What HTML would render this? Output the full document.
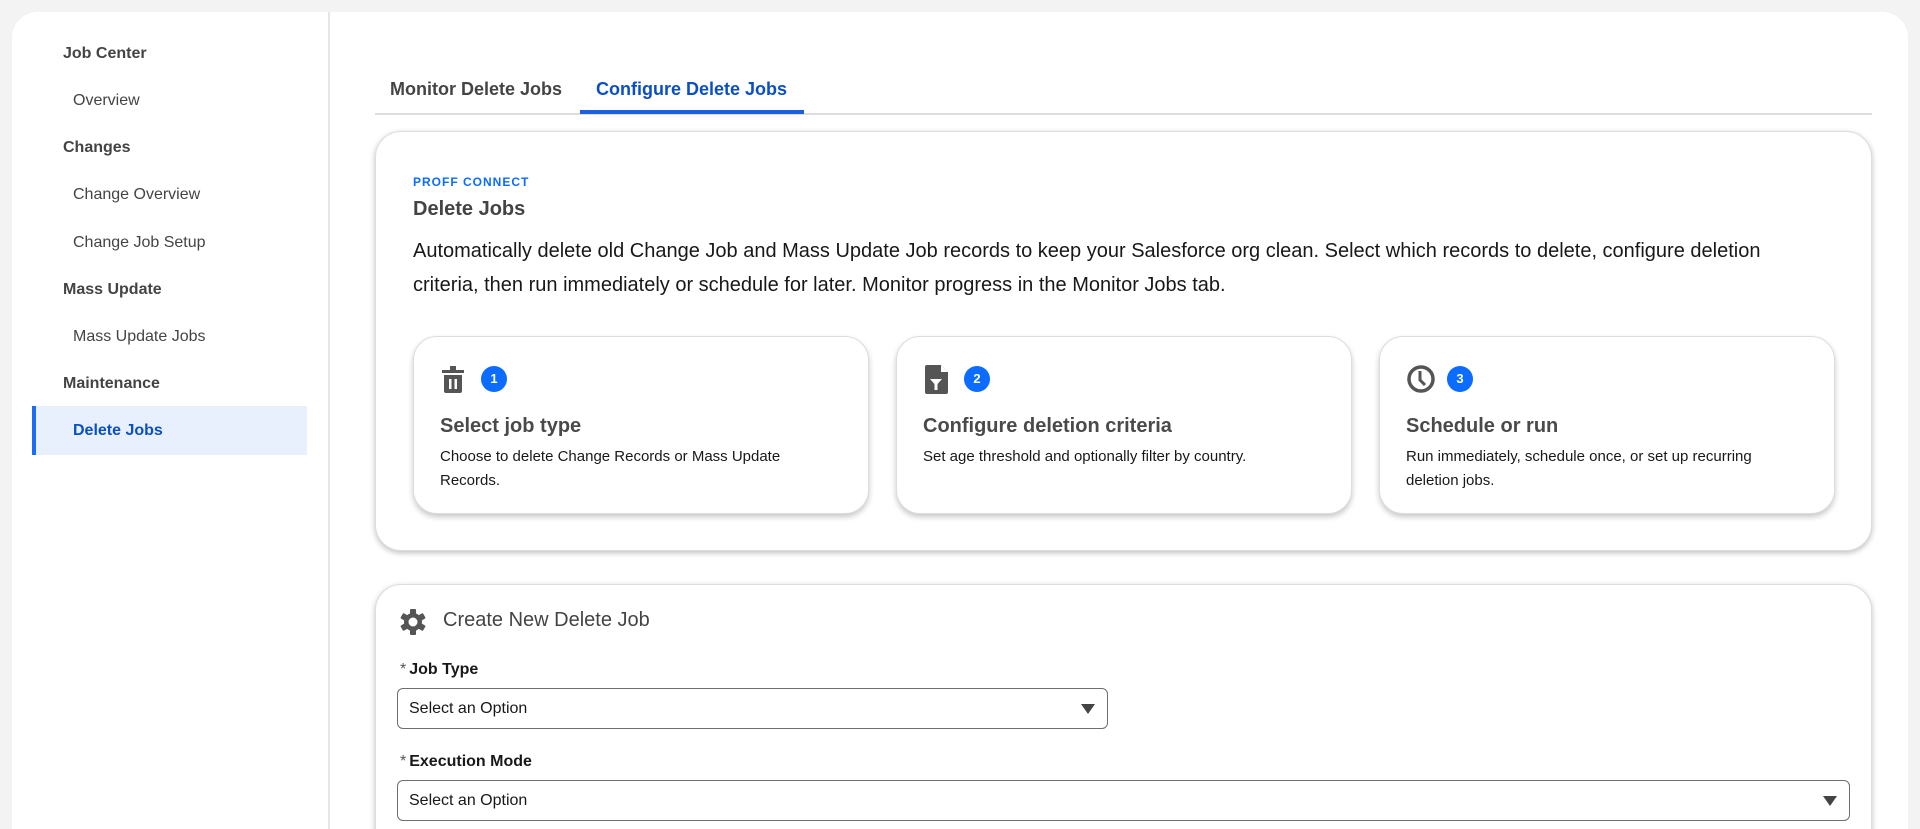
<!DOCTYPE html>
<html><head><style>
*{box-sizing:border-box;margin:0;padding:0}
html,body{width:1920px;height:829px;overflow:hidden}
body{background:#f3f3f3;font-family:"Liberation Sans",Arial,sans-serif;position:relative}
.wrap{position:absolute;left:0;top:0;width:1920px;height:829px;overflow:hidden}
.main{position:absolute;left:12px;top:12px;width:1896px;height:900px;background:#fff;border-radius:26px}
.div{position:absolute;left:328px;top:12px;width:2px;height:830px;background:#e5e5e5}
.abs{position:absolute;white-space:nowrap}
.sh{font-weight:bold;font-size:16px;color:#444;left:63px}
.si{font-size:16px;color:#444;left:73px}
.act{position:absolute;left:32px;top:406px;width:275px;height:49px;background:#e8f0fd;border-left:4px solid #1b6ef3}
.card{position:absolute;background:#fff;border-radius:26px;box-shadow:0 2px 6px rgba(0,0,0,.25);border:1px solid #ddd}
.step{position:absolute;top:336px;width:456px;height:178px;background:#fff;border-radius:24px;box-shadow:0 3px 6px rgba(0,0,0,.22);border:1px solid #ddd}
.step svg{position:absolute;left:27px;top:27px}
.badge{position:absolute;left:67px;top:29px;width:26px;height:26px;border-radius:50%;background:#0b6cff;color:#fff;font-size:13px;font-weight:bold;text-align:center;line-height:26px}
.st{position:absolute;left:26px;top:78px;font-size:20px;font-weight:bold;color:#4a4a4a}
.sd{position:absolute;left:26px;top:108px;font-size:15px;line-height:24px;color:#181818;width:400px}
.lbl{font-size:16px;font-weight:bold;color:#181818;left:400px}
.lbl span{color:#555;font-weight:normal;margin-right:3px}
.sel{position:absolute;height:41px;border:1px solid #6e6e6e;border-radius:6px;font-size:16px;color:#181818;padding-left:11px;line-height:39px}
.sel:after{content:"";position:absolute;right:12px;top:15px;border-left:7px solid transparent;border-right:7px solid transparent;border-top:10px solid #444}
</style></head><body><div class="wrap">
<div class="main"></div>
<div class="div"></div>
<div class="abs sh" style="top:45px">Job Center</div>
<div class="abs si" style="top:92px">Overview</div>
<div class="abs sh" style="top:139px">Changes</div>
<div class="abs si" style="top:186px">Change Overview</div>
<div class="abs si" style="top:234px">Change Job Setup</div>
<div class="abs sh" style="top:281px">Mass Update</div>
<div class="abs si" style="top:328px">Mass Update Jobs</div>
<div class="abs sh" style="top:375px">Maintenance</div>
<div class="act"></div>
<div class="abs si" style="top:422px;color:#0b4fc4;font-weight:bold">Delete Jobs</div>

<div class="abs" style="left:390px;top:79px;font-size:18px;font-weight:bold;color:#444">Monitor Delete Jobs</div>
<div class="abs" style="left:596px;top:79px;font-size:18px;font-weight:bold;color:#0b4fc4">Configure Delete Jobs</div>
<div class="abs" style="left:375px;top:113px;width:1497px;height:2px;background:#ddd"></div>
<div class="abs" style="left:580px;top:110px;width:224px;height:4px;background:#1b5fdf"></div>

<div class="card" style="left:375px;top:131px;width:1497px;height:420px"></div>
<div class="abs" style="left:413px;top:175px;font-size:12px;font-weight:bold;color:#0b6cff;letter-spacing:1px">PROFF CONNECT</div>
<div class="abs" style="left:413px;top:198px;font-size:20px;font-weight:bold;color:#444">Delete Jobs</div>
<div class="abs" style="left:413px;top:234px;font-size:20px;line-height:34px;color:#181818;white-space:normal;width:1400px">Automatically delete old Change Job and Mass Update Job records to keep your Salesforce org clean. Select which records to delete, configure deletion criteria, then run immediately or schedule for later. Monitor progress in the Monitor Jobs tab.</div>

<div class="step" style="left:413px">
<svg width="28" height="32" viewBox="0 0 28 32"><rect x="9" y="2" width="6" height="4" fill="#555"/><rect x="1" y="6" width="22" height="3" fill="#555"/><path d="M3 11h18v16a2 2 0 0 1-2 2H5a2 2 0 0 1-2-2z" fill="#555"/><rect x="8" y="15" width="2.5" height="10" fill="#fff"/><rect x="13.5" y="15" width="2.5" height="10" fill="#fff"/></svg>
<div class="badge">1</div><div class="st">Select job type</div><div class="sd">Choose to delete Change Records or Mass Update Records.</div></div>
<div class="step" style="left:896px">
<svg width="28" height="32" viewBox="0 0 28 32"><path d="M3 1h14l7 7v20a2 2 0 0 1-2 2H3a2 2 0 0 1-2-2V3a2 2 0 0 1 2-2z" fill="#555"/><path d="M17 1v7h7" fill="#fff"/><path d="M6 15h12l-4.5 5v6h-3v-6z" fill="#fff"/></svg>
<div class="badge">2</div><div class="st">Configure deletion criteria</div><div class="sd">Set age threshold and optionally filter by country.</div></div>
<div class="step" style="left:1379px">
<svg width="30" height="32" viewBox="0 0 30 32"><circle cx="14" cy="15" r="12" fill="none" stroke="#555" stroke-width="3.5"/><path d="M13 7v9l5 5" fill="none" stroke="#555" stroke-width="3"/></svg>
<div class="badge">3</div><div class="st">Schedule or run</div><div class="sd">Run immediately, schedule once, or set up recurring deletion jobs.</div></div>

<div class="card" style="left:375px;top:584px;width:1497px;height:300px"></div>
<svg class="abs" style="left:399px;top:608px" width="28" height="28" viewBox="0 0 28 28"><g fill="#555"><circle cx="14" cy="14" r="9"/><rect x="11" y="1" width="6" height="26" rx="1"/><rect x="11" y="1" width="6" height="26" rx="1" transform="rotate(60 14 14)"/><rect x="11" y="1" width="6" height="26" rx="1" transform="rotate(120 14 14)"/></g><circle cx="14" cy="14" r="4.5" fill="#fff"/></svg>
<div class="abs" style="left:443px;top:609px;font-size:20px;color:#444">Create New Delete Job</div>
<div class="abs lbl" style="top:661px"><span>*</span>Job Type</div>
<div class="sel" style="left:397px;top:688px;width:711px">Select an Option</div>
<div class="abs lbl" style="top:753px"><span>*</span>Execution Mode</div>
<div class="sel" style="left:397px;top:780px;width:1453px">Select an Option</div>
</div></body></html>
